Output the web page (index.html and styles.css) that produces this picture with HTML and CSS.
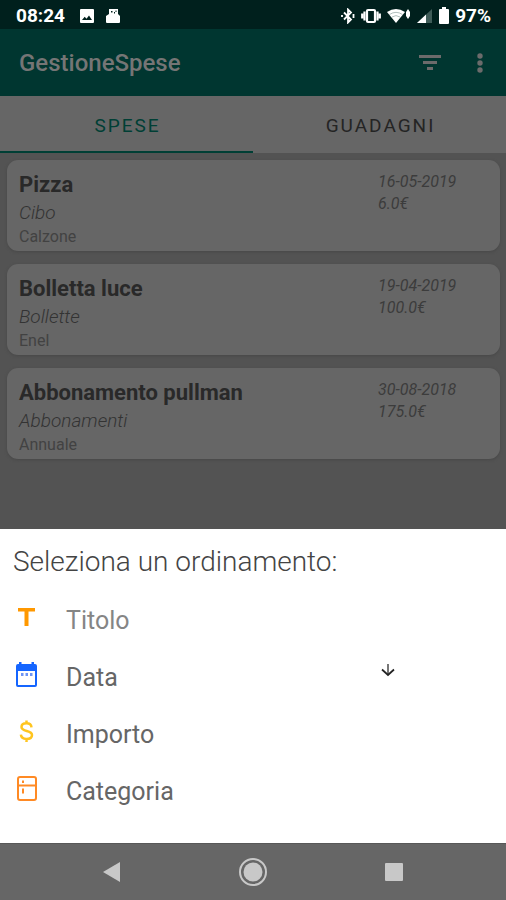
FILE: index.html
```html
<!DOCTYPE html>
<html lang="it">
<head>
  <meta charset="utf-8">
  <meta name="viewport" content="width=device-width, initial-scale=1">
  <title>GestioneSpese</title>
  <link rel="stylesheet" href="styles.css">
</head>
<body>
  <div class="screen">
    <div class="status">
      <span class="status-text">08:24</span>
      <svg class="status-photo" width="14" height="14" viewBox="0 0 14 14"><path fill="#fff" fill-rule="evenodd" d="M1 0h12a1 1 0 0 1 1 1v12a1 1 0 0 1-1 1H1a1 1 0 0 1-1-1V1a1 1 0 0 1 1-1zM2 11h10L9 6.500 6.500 9.700 4.700 7.800z"/></svg>
      <svg class="status-app" width="14" height="14" viewBox="0 0 14 14"><path fill="#fff" fill-rule="evenodd" d="M3 0h9v5l2 2v6a1 1 0 0 1-1 1H1a1 1 0 0 1-1-1V7l3-2zM5 2v1.500h1.500V2zM8 3v1.500h1V3zM9.500 1.500V3h1V1.500z"/></svg>
      <div class="status-right">
        <svg width="14" height="16" viewBox="0 0 14 16" fill="none" stroke="#fff" stroke-width="1.800"><path d="M3 4.500l7 7L7 14.500v-13l3 3-7 7"/><path d="M1 7v2M12.500 6v4"/></svg>
        <svg width="20" height="16" viewBox="0 0 20 16" fill="none" stroke="#fff"><rect x="6" y="2" width="8" height="12" rx="1" stroke-width="2.200"/><path stroke-width="2.200" d="M3.500 3.500v9M1.200 5.500v5M16.500 3.500v9M18.800 5.500v5"/></svg>
        <svg width="24" height="16" viewBox="0 0 24 16"><path fill="#fff" d="M0 4Q9 -2 18 4L9 15z"/><path fill="none" stroke="#8fa3a1" stroke-width=".7" d="M2.500 6.500q6.500-4.300 13 0M5 9q4-2.800 8 0"/><path fill="#fff" d="M21 1l2 3v4l-2 3-2-3V4z"/></svg>
        <svg width="16" height="16" viewBox="0 0 16 16"><path fill="#3f5c58" d="M0 15L15 1v14z"/><path fill="#fff" d="M0 15l9-8.400V15z"/></svg>
        <svg width="10" height="17" viewBox="0 0 10 17"><path fill="#fff" d="M3 0h4v2h2a1 1 0 0 1 1 1v13a1 1 0 0 1-1 1H1a1 1 0 0 1-1-1V3a1 1 0 0 1 1-1h2z"/></svg>
        <span class="status-text">97%</span>
      </div>
    </div>

    <header class="appbar">
      <h1>GestioneSpese</h1>
      <button type="button" class="icon-button" aria-label="Ordina"><svg width="24" height="16" viewBox="0 0 24 16"><path fill="#6b6b6b" d="M1 0h22v3H1zM5 6h14v3H5zM9 12h6v3H9z"/></svg></button>
      <button type="button" class="icon-button" aria-label="Menu"><svg width="6" height="20" viewBox="0 0 6 20" fill="#6b6b6b"><circle cx="3" cy="3" r="2.700"/><circle cx="3" cy="10" r="2.700"/><circle cx="3" cy="17" r="2.700"/></svg></button>
    </header>

    <nav class="tabs">
      <button type="button" class="tab tab-active">SPESE</button>
      <button type="button" class="tab">GUADAGNI</button>
    </nav>

    <main class="list">
      <article class="card">
        <div><h2>Pizza</h2><p class="category">Cibo</p><p class="note">Calzone</p></div>
        <div class="meta"><p>16-05-2019</p><p>6.0€</p></div>
      </article>
      <article class="card">
        <div><h2>Bolletta luce</h2><p class="category">Bollette</p><p class="note">Enel</p></div>
        <div class="meta"><p>19-04-2019</p><p>100.0€</p></div>
      </article>
      <article class="card">
        <div><h2>Abbonamento pullman</h2><p class="category">Abbonamenti</p><p class="note">Annuale</p></div>
        <div class="meta"><p>30-08-2018</p><p>175.0€</p></div>
      </article>
    </main>

    <section class="sheet">
      <h2 class="sheet-title">Seleziona un ordinamento:</h2>
      <button type="button" class="option option-muted">
        <svg width="26" height="26" viewBox="0 0 26 26"><path fill="#ff9800" d="M5 3h17v3.500h-6.500V21h-4V6.500H5z"/></svg>
        <span>Titolo</span>
      </button>
      <button type="button" class="option">
        <svg width="26" height="26" viewBox="0 0 26 26"><path fill="#1565ff" fill-rule="evenodd" d="M6 0h2.500v2h10V0H21v2h1a2 2 0 0 1 2 2v19a2 2 0 0 1-2 2H5a2 2 0 0 1-2-2V4a2 2 0 0 1 2-2h1zM5 9v14h17V9z"/><path fill="#6d94f5" d="M8 11h2.500v3H8zM12.500 11H15v3h-2.500zM17 11h2.500v3H17z"/></svg>
        <span>Data</span>
        <svg class="direction" width="16" height="16" viewBox="0 0 16 16" fill="none"><path stroke="#777" stroke-width="2" d="M8 2v10"/><path stroke="#222" stroke-width="1.700" d="M2 7.500l6 5.500 6-5.500"/></svg>
      </button>
      <button type="button" class="option">
        <svg width="26" height="26" viewBox="0 0 26 26" fill="none" stroke="#ffc51f" stroke-width="2.500"><path d="M18.500 8.300C18.300 5.500 16.300 4.300 13.500 4.300c-3 0-5 1.400-5 3.700 0 5.300 10.500 2.600 10.500 8 0 2.500-2.300 4-5.500 4-3.300 0-5.400-1.400-5.600-4.300M13.500 1.500v3M13.500 20v3"/></svg>
        <span>Importo</span>
      </button>
      <button type="button" class="option">
        <svg width="26" height="26" viewBox="0 0 26 26" fill="none" stroke="#ff8a24" stroke-width="2"><rect x="5" y="1" width="18" height="23" rx="2"/><path d="M5 9.500h18M10 4.500v2.500M10 12.500v5"/></svg>
        <span>Categoria</span>
      </button>
    </section>

    <nav class="navbar">
      <button type="button" aria-label="Indietro"><svg width="30" height="30" viewBox="0 0 30 30"><path fill="#c8c8c8" d="M6 15L23 5v20z"/></svg></button>
      <button type="button" aria-label="Home"><svg width="30" height="30" viewBox="0 0 30 30"><circle cx="15" cy="15" r="13" fill="none" stroke="#c8c8c8" stroke-width="2"/><circle cx="15" cy="15" r="9.500" fill="#c8c8c8"/></svg></button>
      <button type="button" aria-label="Recenti"><svg width="30" height="30" viewBox="0 0 30 30"><rect x="6" y="6" width="18" height="18" rx="1" fill="#c8c8c8"/></svg></button>
    </nav>
  </div>
</body>
</html>
```
FILE: styles.css
```css
* {
  box-sizing: border-box;
}

body {
  margin: 0;
  font-family: Roboto, "Liberation Sans", sans-serif;
}

h1,
h2,
p {
  margin: 0;
}

button {
  border: 0;
  padding: 0;
  background: none;
  font: inherit;
  color: inherit;
  cursor: pointer;
}

svg {
  display: block;
  flex: none;
}

.screen {
  display: flex;
  flex-direction: column;
  min-height: 100vh;
  background: #535353;
}

.status {
  display: flex;
  align-items: center;
  height: 29px;
  padding: 2px 15px 0 16px;
  background: #00201d;
  color: #fff;
}

.status-text {
  font-size: 19px;
  line-height: 27px;
  font-weight: 700;
}

.status-photo {
  margin-left: 15px;
}

.status-app {
  margin-left: 12px;
}

.status-right {
  display: flex;
  align-items: center;
  gap: 6px;
  margin-left: auto;
}

.appbar {
  display: flex;
  align-items: center;
  height: 67px;
  padding: 0 10px 0 19px;
  background: #003630;
  color: #757575;
}

.appbar h1 {
  flex: 1;
  font-size: 24px;
  line-height: 32px;
  font-weight: 500;
}

.icon-button {
  display: flex;
  align-items: center;
  justify-content: center;
  width: 32px;
  height: 48px;
  margin-left: 18px;
}

.tabs {
  display: flex;
  height: 57px;
  background: #666;
}

.tab {
  flex: 1;
  padding: 4px 0 0 2px;
  border-bottom: 2px solid transparent;
  font-size: 19px;
  font-weight: 400;
  letter-spacing: 2px;
  color: #242424;
}

.tab-active {
  border-color: #003f35;
  color: #003f35;
}

.list {
  display: flex;
  flex: 1;
  flex-direction: column;
  gap: 13px;
  padding: 7px 6px 20px 7px;
}

.card {
  display: grid;
  grid-template-columns: 1fr 110px;
  padding: 11px 12px;
  height: 91px;
  border-radius: 11px;
  background: #666;
  box-shadow: 0 1px 3px #484848;
  color: #333;
}

.card h2 {
  font-size: 22px;
  line-height: 28px;
  font-weight: 700;
  color: #292929;
}

.category {
  font-size: 19px;
  line-height: 27px;
  font-style: italic;
  font-weight: 300;
}

.note {
  font-size: 16px;
  line-height: 21px;
  color: #424242;
}

.meta {
  font-size: 16px;
  line-height: 22px;
  font-style: italic;
  color: #3c3c3c;
}

.sheet {
  display: flex;
  flex-direction: column;
  padding: 13px 13px 23px;
  background: #fff;
  color: #666;
}

.sheet-title {
  margin-bottom: 10px;
  font-size: 28px;
  line-height: 40px;
  font-weight: 300;
  color: #444;
}

.option {
  display: grid;
  grid-template-columns: 53px 1fr 113px;
  align-items: center;
  height: 57px;
  font-size: 25px;
  line-height: 32px;
  text-align: left;
}

.option-muted {
  color: #858585;
}

.option svg {
  margin-bottom: 6px;
}

.option .direction {
  margin: 0 0 16px;
}

.navbar {
  display: flex;
  align-items: center;
  justify-content: space-around;
  height: 57px;
  padding: 0 42px;
  border-top: 1px solid #585858;
  background: #666;
}
```
